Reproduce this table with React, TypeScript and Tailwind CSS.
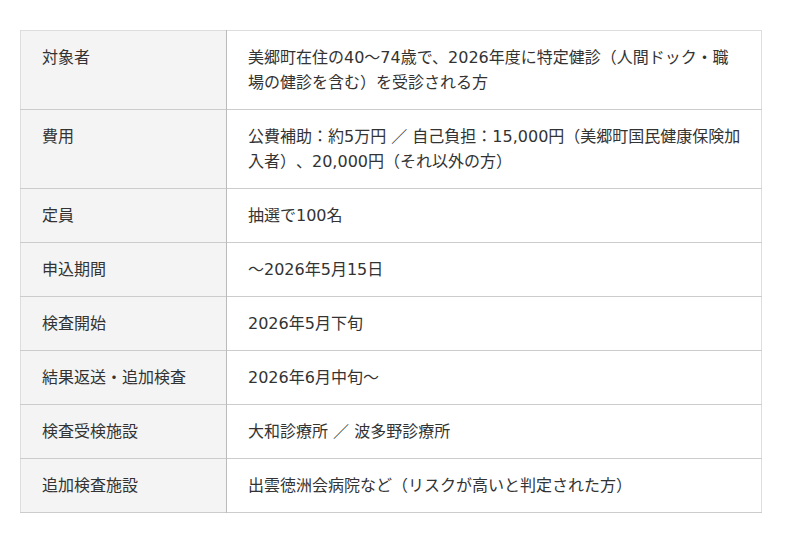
const rows: [string, string][] = [
  ['対象者', '美郷町在住の40～74歳で、2026年度に特定健診（人間ドック・職場の健診を含む）を受診される方'],
  ['費用', '公費補助：約5万円 ／ 自己負担：15,000円（美郷町国民健康保険加入者）、20,000円（それ以外の方）'],
  ['定員', '抽選で100名'],
  ['申込期間', '～2026年5月15日'],
  ['検査開始', '2026年5月下旬'],
  ['結果返送・追加検査', '2026年6月中旬～'],
  ['検査受検施設', '大和診療所 ／ 波多野診療所'],
  ['追加検査施設', '出雲徳洲会病院など（リスクが高いと判定された方）'],
]

export default function App() {
  return (
    <div className="min-h-screen bg-white px-[20px] pt-[30px] font-['DejaVu_Sans','Noto_Sans_CJK_JP',sans-serif] text-[16px] leading-[25px] text-[#333] [text-spacing-trim:space-all]">
      <table className="w-[742px] border-collapse border border-[#ddd]">
        <tbody>
          {rows.map(([k, v]) => (
            <tr key={k} className="border-b border-[#ccc]">
              <th className="w-[206px] border-r border-[#bbb] bg-[#f4f4f4] px-[21px] py-[14px] text-left align-top font-normal">
                {k}
              </th>
              <td className="py-[14px] pl-[21px] pr-[18px] align-top">{v}</td>
            </tr>
          ))}
        </tbody>
      </table>
    </div>
  )
}
